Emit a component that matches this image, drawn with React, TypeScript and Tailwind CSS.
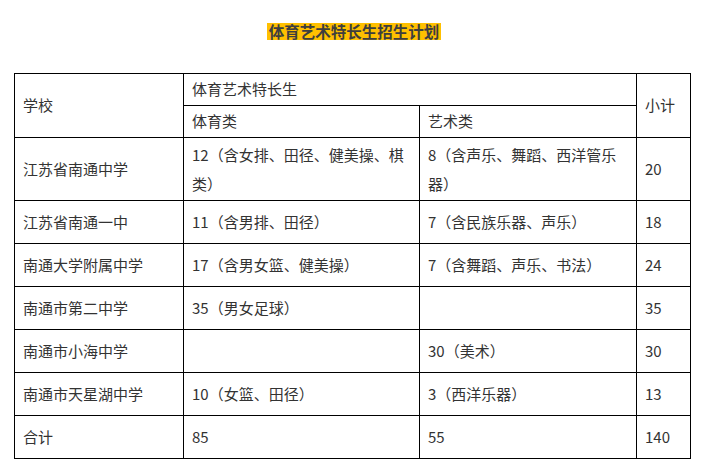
import React from "react";

const cell = "bg-white flex items-center pl-[8px] pr-[4px] text-[15px] text-[#333333]";

export default function App() {
  const rows: [string, string, string, string][] = [
    ["江苏省南通一中", "11（含男排、田径）", "7（含民族乐器、声乐）", "18"],
    ["南通大学附属中学", "17（含男女篮、健美操）", "7（含舞蹈、声乐、书法）", "24"],
    ["南通市第二中学", "35（男女足球）", "", "35"],
    ["南通市小海中学", "", "30（美术）", "30"],
    ["南通市天星湖中学", "10（女篮、田径）", "3（西洋乐器）", "13"],
    ["合计", "85", "55", "140"],
  ];
  return (
    <div
      className="w-[703px] h-[465px] bg-white overflow-hidden"
      style={{ fontFamily: '"Noto Sans CJK SC", "Noto Sans", sans-serif' }}
    >
      <div className="pt-[23px] flex justify-center">
        <span className="inline-block h-[17px] leading-[17px] bg-[#ffc000] font-bold text-[15.5px] text-[#3e3e3e] px-[2px] ml-[5px]">
          体育艺术特长生招生计划
        </span>
      </div>
      <div className="mt-[33px] ml-[14px] w-[677px] bg-black p-px grid gap-px grid-cols-[168px_235px_216px_53px] grid-rows-[31px_31px_62px_repeat(6,42px)]">
        <div className={`${cell} row-span-2`}>学校</div>
        <div className={`${cell} col-span-2`}>体育艺术特长生</div>
        <div className={`${cell} row-span-2`}>小计</div>
        <div className={cell}>体育类</div>
        <div className={cell}>艺术类</div>

        <div className={cell}>江苏省南通中学</div>
        <div className={`${cell} leading-[29px]`}>
          <span>12（含女排、田径、健美操、棋类）</span>
        </div>
        <div className={`${cell} leading-[29px]`}>
          <span>8（含声乐、舞蹈、西洋管乐器）</span>
        </div>
        <div className={cell}>20</div>

        {rows.map((r, i) => (
          <React.Fragment key={i}>
            <div className={cell}>{r[0]}</div>
            <div className={cell}>{r[1]}</div>
            <div className={cell}>{r[2]}</div>
            <div className={cell}>{r[3]}</div>
          </React.Fragment>
        ))}
      </div>
    </div>
  );
}
